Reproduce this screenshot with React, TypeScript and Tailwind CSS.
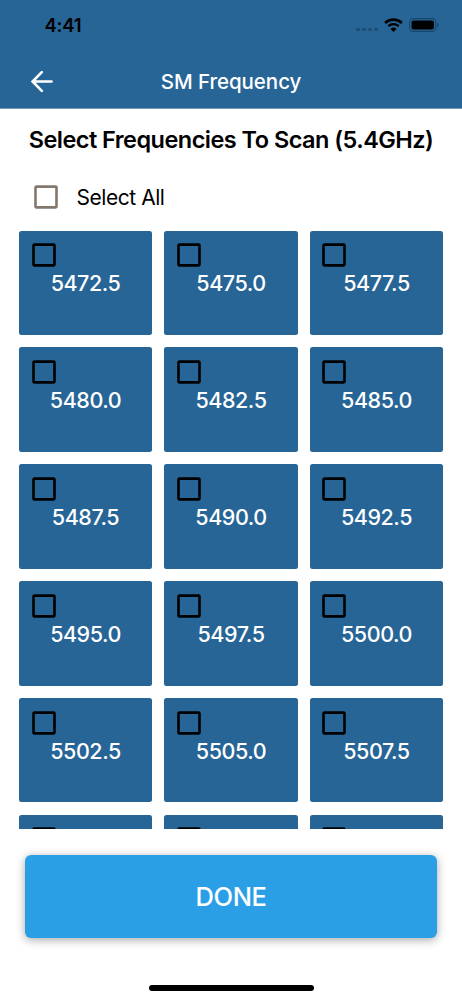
import clsx from 'clsx'
import { useState } from 'react'

const FIRST_FREQUENCY = 5472.5
const STEP = 2.5
const FREQUENCIES = Array.from({ length: 18 }, (_, i) =>
  (FIRST_FREQUENCY + i * STEP).toFixed(1),
)

export default function App() {
  const [selected, setSelected] = useState<string[]>([])
  const allSelected = selected.length === FREQUENCIES.length

  const toggle = (frequency: string) => {
    setSelected((prev) =>
      prev.includes(frequency)
        ? prev.filter((f) => f !== frequency)
        : [...prev, frequency],
    )
  }

  return (
    <div className="flex h-[1000px] w-[462px] flex-col overflow-hidden bg-white font-['Inter','Liberation_Sans',sans-serif] text-black">
      <header className="h-[109px] shrink-0 border-b border-[#7197b9] bg-[#276597]">
        <StatusBar />
        <NavBar />
      </header>

      <h1 className="h-[62px] shrink-0 pt-[14px] text-center text-[23.5px] leading-[34px] font-semibold tracking-[-0.53px] whitespace-nowrap">
        Select Frequencies To Scan (5.4GHz)
      </h1>

      <label className="flex h-[59.5px] shrink-0 items-start pt-[14px] pl-[34px]">
        <CheckBox
          className="text-[#82786d]"
          checked={allSelected}
          onToggle={() => setSelected(allSelected ? [] : FREQUENCIES)}
        />
        <span className="ml-[18.5px] pt-px text-[21px] leading-6 tracking-[-0.45px]">
          Select All
        </span>
      </label>

      <div className="h-[598px] shrink-0 overflow-y-auto px-[19px] [scrollbar-width:none]">
        <div className="grid grid-cols-3 gap-x-[12.4px] gap-y-[12.5px]">
          {FREQUENCIES.map((frequency) => (
            <FrequencyTile
              key={frequency}
              frequency={frequency}
              checked={selected.includes(frequency)}
              onToggle={() => toggle(frequency)}
            />
          ))}
        </div>
      </div>

      <div className="flex grow flex-col items-center pt-[26.5px]">
        <button
          type="button"
          className="h-[82.5px] w-[412px] rounded-[6px] bg-[#2b9fe6] pt-[2px] text-[25.5px] font-medium tracking-[-0.4px] text-white shadow-[0_2px_10px_rgba(0,0,0,0.35)]"
        >
          DONE
        </button>
        <div className="mt-[47.5px] h-[5.5px] w-[165px] rounded-full bg-black" />
      </div>
    </div>
  )
}

const StatusBar = () => {
  return (
    <div className="flex h-[54px] items-center justify-between pr-[22.5px] pb-1 pl-[44.5px]">
      <span className="text-[18.5px] leading-6 font-semibold tracking-[-0.2px]">
        4:41
      </span>
      <div className="flex items-center">
        <div className="mt-[9px] mr-[6px] flex gap-[2.3px]">
          {[0, 1, 2, 3].map((i) => (
            <span
              key={i}
              className="h-[3.6px] w-[3.6px] rounded-[1px] bg-[#1e4e74]"
            />
          ))}
        </div>
        <WifiIcon />
        <BatteryIcon />
      </div>
    </div>
  )
}

const NavBar = () => {
  return (
    <div className="grid h-[55px] grid-cols-[1fr_auto_1fr] items-center">
      <button type="button" className="ml-[31px] w-[22px]" aria-label="Back">
        <svg width="22" height="22" viewBox="0 0.5 22 22" fill="none">
          <path
            d="M20.5 11H1.8M10.8 1.6L1.6 11l9.2 9.4"
            stroke="white"
            strokeWidth="2.6"
            strokeLinecap="round"
          />
        </svg>
      </button>
      <span className="pt-px text-[20.5px] leading-7 font-medium tracking-[-0.05px] text-white">
        SM Frequency
      </span>
    </div>
  )
}

const WifiIcon = () => {
  return (
    <svg
      className="mr-[6px]"
      width="19"
      height="14"
      viewBox="0 0 19 14"
      fill="none"
    >
      <path d="M1.1 5a12.1 12.1 0 0 1 16.8 0" stroke="black" strokeWidth="2.6" />
      <path d="M4.3 8.2a7.6 7.6 0 0 1 10.4 0" stroke="black" strokeWidth="2.4" />
      <path d="M9.5 13.9l-3-3a4.4 4.4 0 0 1 6 0z" fill="black" />
    </svg>
  )
}

const BatteryIcon = () => {
  return (
    <svg width="31" height="14" viewBox="0 0 31 14" fill="none">
      <rect
        x="0.6"
        y="0.6"
        width="26.2"
        height="12.8"
        rx="3.8"
        stroke="#1a4668"
        strokeWidth="1.1"
      />
      <rect x="2.5" y="2.4" width="22.4" height="9.2" rx="2" fill="black" />
      <path d="M28.2 4.8c.9.4 1.5 1.2 1.5 2.2s-.6 1.8-1.5 2.2z" fill="#1a4668" />
    </svg>
  )
}

const CheckBox = ({
  checked,
  className,
  onToggle,
}: {
  checked: boolean
  className?: string
  onToggle: () => void
}) => {
  return (
    <button
      type="button"
      role="checkbox"
      aria-checked={checked}
      onClick={onToggle}
      className={clsx('block size-[24px] shrink-0', className)}
    >
      <svg width="24" height="24" viewBox="0 0 24 24" fill="none">
        <rect
          x="1.5"
          y="1.6"
          width="21"
          height="20.8"
          rx="0.8"
          stroke="currentColor"
          strokeWidth="2.6"
        />
        {checked && <path d="M6 12l4 4 8-8" stroke="currentColor" strokeWidth="2.6" />}
      </svg>
    </button>
  )
}

const FrequencyTile = ({
  frequency,
  checked,
  onToggle,
}: {
  frequency: string
  checked: boolean
  onToggle: () => void
}) => {
  return (
    <div className="h-[104.4px] rounded-[2.5px] bg-[#276597] pt-[12.5px]">
      <CheckBox
        className="ml-[12.5px] text-black"
        checked={checked}
        onToggle={onToggle}
      />
      <div className="mt-[3px] text-center text-[21.5px] leading-[26px] font-medium tracking-[-0.45px] text-white">
        {frequency}
      </div>
    </div>
  )
}
